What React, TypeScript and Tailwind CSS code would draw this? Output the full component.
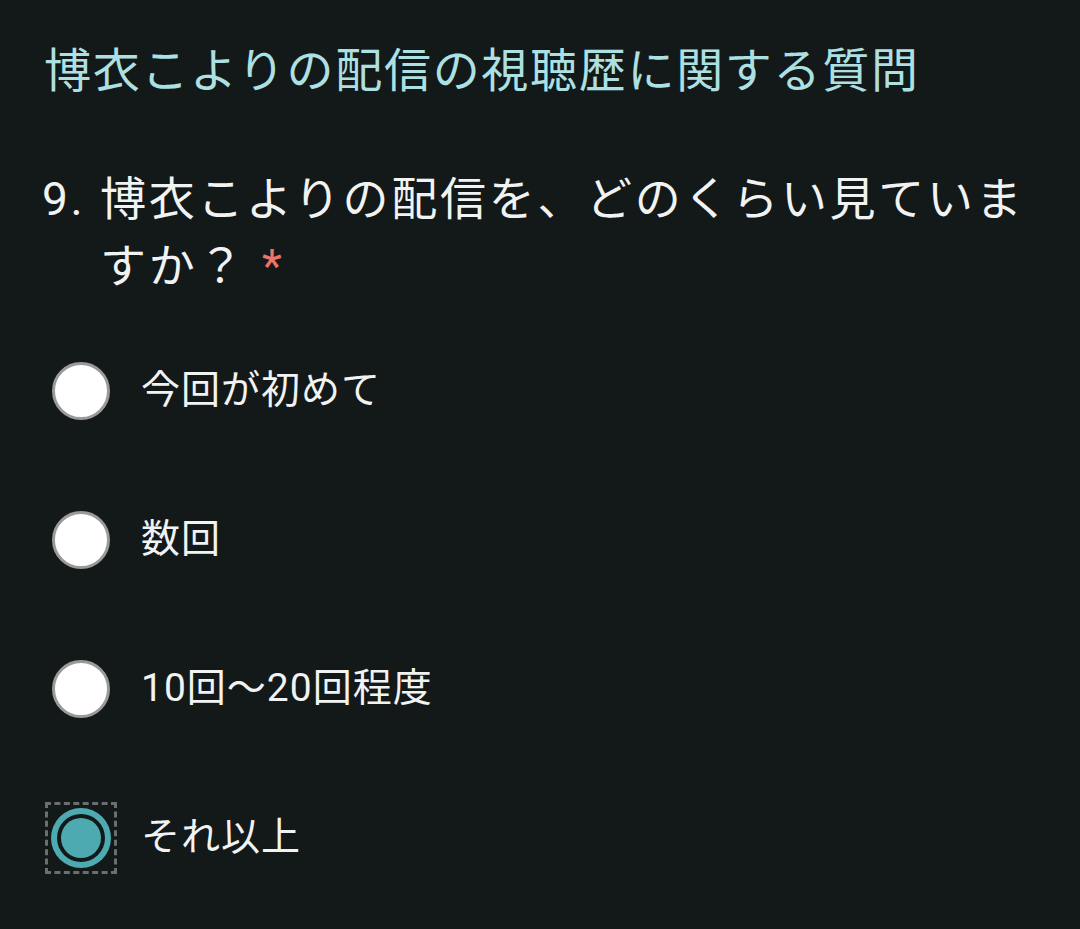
import React from "react";

const options = ["今回が初めて", "数回", "10回〜20回程度", "それ以上"];

function Radio({ selected }: { selected: boolean }) {
  if (selected) {
    return (
      <div className="w-[72px] h-[72px] border-[3px] border-dashed border-[#6b6e6f] flex items-center justify-center -ml-[7px] -mr-[7px]">
        <div className="w-[60px] h-[60px] rounded-full bg-[#4eaab1] flex items-center justify-center">
          <div className="w-[48px] h-[48px] rounded-full bg-[#131819] flex items-center justify-center">
            <div className="w-[40px] h-[40px] rounded-full bg-[#4eaab1]" />
          </div>
        </div>
      </div>
    );
  }
  return <div className="w-[58px] h-[58px] rounded-full bg-white border-[3px] border-[#9a9a9a]" />;
}

export default function App() {
  return (
    <div
      className="w-[1080px] h-[929px] bg-[#131819] overflow-hidden"
      style={{ fontFamily: "Roboto, 'Noto Sans CJK JP', sans-serif" }}
    >
      <h1 className="pt-[42px] pl-[44px] text-[47px] leading-[58px] text-[#ade0e2] tracking-[1.7px] font-normal">
        博衣こよりの配信の視聴歴に関する質問
      </h1>
      <div className="mt-[66px] flex pl-[42px] pr-[30px] text-[46px] leading-[67px] text-[#f1f2f2] tracking-[2.7px]">
        <span className="w-[58px] shrink-0">9.</span>
        <span>
          博衣こよりの配信を、どのくらい見ていますか？
          <span className="text-[#ee7368] ml-[16px]">*</span>
        </span>
      </div>
      <div className="mt-[16px] flex flex-col">
        {options.map((o, i) => (
          <div key={o} className="h-[149px] flex items-center pl-[52px]">
            <Radio selected={i === 3} />
            <span className="ml-[31px] text-[39px] text-[#f1f2f2] tracking-[1px]">{o}</span>
          </div>
        ))}
      </div>
    </div>
  );
}
